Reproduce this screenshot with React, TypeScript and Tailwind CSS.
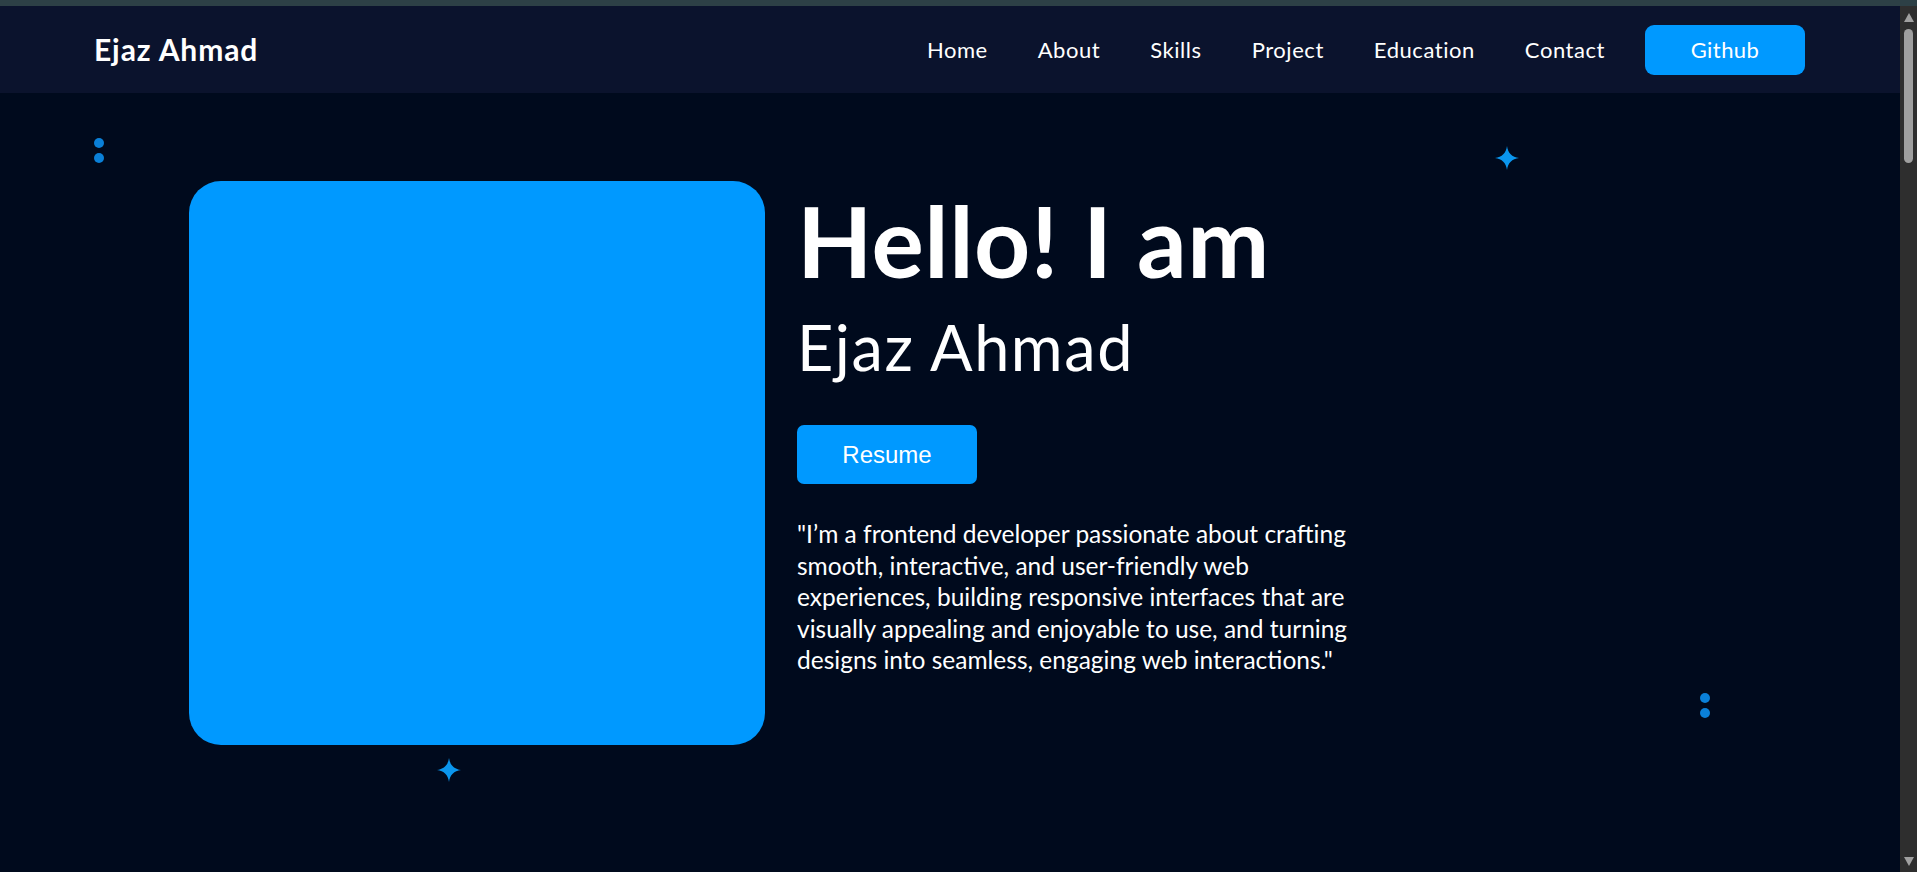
import React from "react";

const Star = ({ className }: { className?: string }) => (
  <svg viewBox="0 0 24 24" className={className} fill="#0a96ee">
    <path d="M12 0 C12.9 7 17 11.1 24 12 C17 12.9 12.9 17 12 24 C11.1 17 7 12.9 0 12 C7 11.1 11.1 7 12 0Z" />
  </svg>
);

const Dots = ({ className }: { className?: string }) => (
  <div className={"flex flex-col gap-[5px] " + (className ?? "")}>
    <span className="block w-[10px] h-[10px] rounded-full bg-[#0a80d8]" />
    <span className="block w-[10px] h-[10px] rounded-full bg-[#0a80d8]" />
  </div>
);

export default function App() {
  const links = ["Home", "About", "Skills", "Project", "Education", "Contact"];
  return (
    <div
      className="w-[1917px] h-[872px] overflow-hidden flex flex-col bg-[#000a1d]"
      style={{ fontFamily: "Lato, 'Noto Sans', sans-serif" }}
    >
      <div className="h-[6px] shrink-0 bg-[#2d4046]" />
      <div className="flex flex-1 min-h-0">
        <div className="flex-1 flex flex-col min-w-0">
          <nav className="h-[87px] shrink-0 bg-[#0b132d] flex items-center justify-between pl-[94px] pr-[95px]">
            <div className="text-white font-bold text-[30px] tracking-[0.03em]">Ejaz Ahmad</div>
            <div className="flex items-center">
              <ul className="flex items-center gap-[50px] mr-[40px]">
                {links.map((l) => (
                  <li key={l} className="text-white text-[22px] tracking-[0.025em]">
                    {l}
                  </li>
                ))}
              </ul>
              <button className="w-[160px] h-[50px] rounded-[9px] bg-[#0099ff] text-white text-[22px] tracking-[0.02em]">
                Github
              </button>
            </div>
          </nav>
          <main className="relative flex-1">
            <Dots className="absolute left-[94px] top-[45px]" />
            <Star className="absolute left-[1495px] top-[53px] w-[24px] h-[24px]" />
            <Star className="absolute left-[437px] top-[665px] w-[24px] h-[24px]" />
            <Dots className="absolute left-[1700px] top-[600px]" />
            <div className="flex items-start gap-[32px] pl-[189px] pt-[88px]">
              <div className="w-[576px] h-[564px] rounded-[32px] bg-[#0099ff] shrink-0" />
              <div className="flex flex-col">
                <h1 className="text-white font-bold text-[98px] leading-none mt-[10px] tracking-[0.005em]">
                  Hello! I am
                </h1>
                <h2 className="text-white font-normal text-[63px] leading-none mt-[26px] tracking-[0.025em]">
                  Ejaz Ahmad
                </h2>
                <button
                  className="mt-[47px] w-[180px] h-[59px] rounded-[7px] bg-[#0099ff] text-white text-[24px]"
                  style={{ fontFamily: "'Liberation Sans', Arial, sans-serif" }}
                >
                  Resume
                </button>
                <p className="mt-[34px] w-[572px] text-white text-[24.5px] leading-[31.5px]">
                  "I’m a frontend developer passionate about crafting smooth, interactive, and user-friendly web
                  experiences, building responsive interfaces that are visually appealing and enjoyable to use, and
                  turning designs into seamless, engaging web interactions."
                </p>
              </div>
            </div>
          </main>
        </div>
        <div className="w-[17px] shrink-0 bg-[#2e2e2e] relative flex flex-col items-center">
          <div className="mt-[7px] w-0 h-0 border-l-[5px] border-r-[5px] border-b-[9px] border-l-transparent border-r-transparent border-b-[#a0a0a0]" />
          <div className="mt-[7px] w-[9px] h-[134px] rounded-full bg-[#9f9f9f]" />
          <div className="mt-auto mb-[6px] w-0 h-0 border-l-[5px] border-r-[5px] border-t-[9px] border-l-transparent border-r-transparent border-t-[#a0a0a0]" />
        </div>
      </div>
    </div>
  );
}
